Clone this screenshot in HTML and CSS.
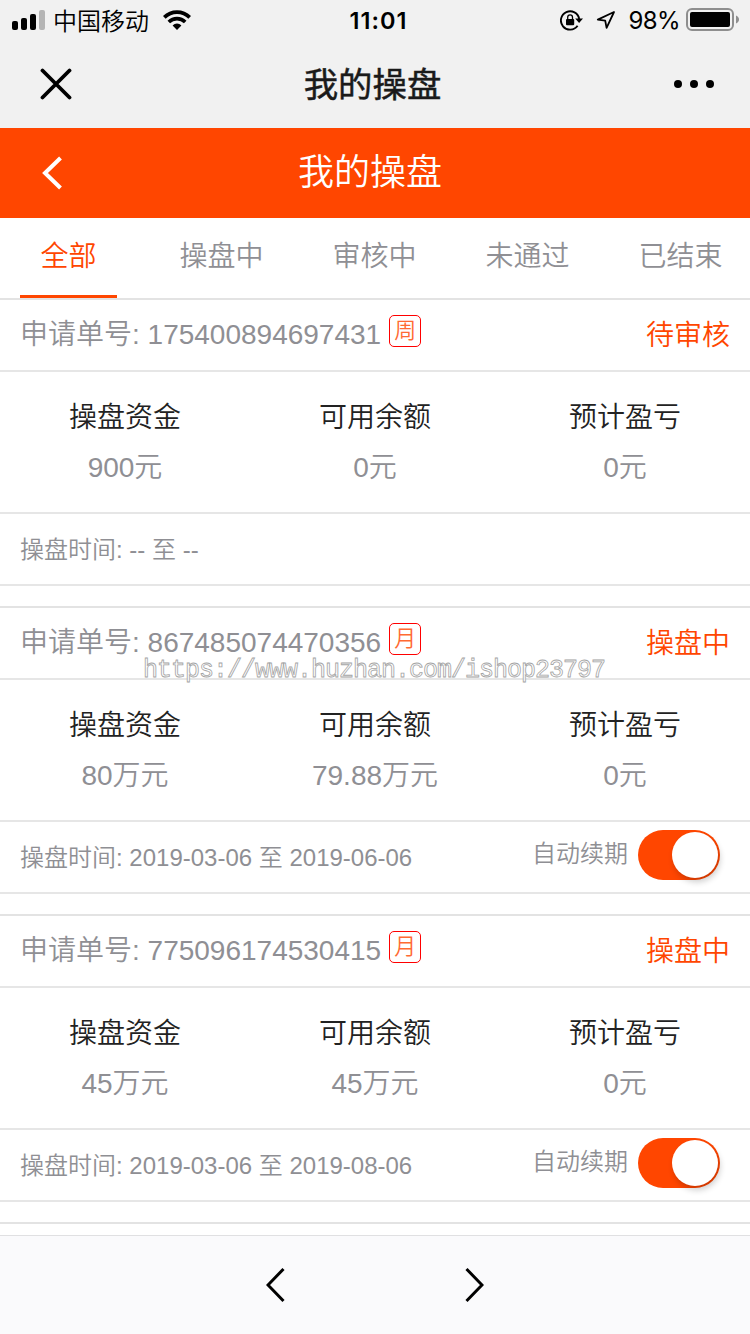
FILE: index.html
```html
<!DOCTYPE html>
<html lang="zh-CN">
<head>
    <meta charset="UTF-8">
    <meta name="viewport" content="width=device-width, initial-scale=1.0">
    <title>我的操盘</title>
    <link rel="stylesheet" href="styles.css">
</head>
<body>
    <div class="status-bar">
        <div class="status-left">
            <svg class="signal" width="34" height="20" viewBox="0 0 34 20">
                <rect x="0" y="11" width="6" height="9" rx="2"/>
                <rect x="9" y="8" width="6" height="12" rx="2"/>
                <rect x="18" y="4" width="6" height="16" rx="2"/>
                <rect x="27" y="0" width="6" height="20" rx="2" fill="#b4b4b4"/>
            </svg>
            <span class="carrier">中国移动</span>
            <svg class="wifi" width="28" height="20" viewBox="0 0 28 20">
                <path d="M1.3 7.3a18 18 0 0 1 25.4 0" fill="none" stroke="#000" stroke-width="3.8"/>
                <path d="M5.8 12a11.6 11.6 0 0 1 16.4 0" fill="none" stroke="#000" stroke-width="3.6"/>
                <path d="M14 20l-4.4-4.6a6.3 6.3 0 0 1 8.8 0z"/>
            </svg>
        </div>
        <span class="clock">11:01</span>
        <div class="status-right">
            <svg class="lock" width="23" height="21" viewBox="0 0 23 21">
                <path d="M17.6 15.8A9.2 9.2 0 1 1 19.2 9" fill="none" stroke="#000" stroke-width="1.9"/>
                <path d="M15.2 8.6H23L19.1 13z"/>
                <rect x="6" y="9" width="8.2" height="6.2" rx="1"/>
                <path d="M7.7 9.5V7.2a2.4 2.4 0 0 1 4.8 0v2.3" fill="none" stroke="#000" stroke-width="1.3"/>
            </svg>
            <svg class="arrow" width="20" height="20" viewBox="0 0 20 20">
                <path d="M18 2L1.8 9.6L9.2 10.6L10.6 17.8z" fill="none" stroke="#000" stroke-width="1.8" stroke-linejoin="round"/>
            </svg>
            <span class="percent">98%</span>
            <svg class="battery" width="54" height="24" viewBox="0 0 54 24">
                <rect x="1" y="1" width="46" height="21" rx="5" fill="none" stroke="#8e8e8e" stroke-width="2"/>
                <rect x="4" y="4" width="40" height="15" rx="2"/>
                <path d="M50 7.5c4 1.4 4 6.6 0 8z" fill="#8e8e8e"/>
            </svg>
        </div>
    </div>

    <div class="nav-bar">
        <svg width="32" height="32" viewBox="0 0 32 32">
            <path d="M2.5 2.5L29.5 29.5M29.5 2.5L2.5 29.5" fill="none" stroke="#000" stroke-width="3.8" stroke-linecap="round"/>
        </svg>
        <span class="nav-title">我的操盘</span>
        <svg width="42" height="10" viewBox="0 0 42 10">
            <circle cx="5" cy="5" r="4"/>
            <circle cx="21" cy="5" r="4"/>
            <circle cx="37" cy="5" r="4"/>
        </svg>
    </div>

    <header class="header">
        <svg class="back" width="20" height="34" viewBox="0 0 20 34">
            <path d="M18.5 2L3 17L18.5 32" fill="none" stroke="#fff" stroke-width="4"/>
        </svg>
        <h1>我的操盘</h1>
    </header>

    <nav class="tabs">
        <a class="tab active">全部</a>
        <a class="tab">操盘中</a>
        <a class="tab">审核中</a>
        <a class="tab">未通过</a>
        <a class="tab">已结束</a>
    </nav>

    <main class="list">
        <section class="card">
            <div class="card-head">
                <span class="order">申请单号: 175400894697431</span>
                <span class="badge">周</span>
                <span class="state">待审核</span>
            </div>
            <div class="card-body">
                <div class="item"><p class="label">操盘资金</p><p class="value">900元</p></div>
                <div class="item"><p class="label">可用余额</p><p class="value">0元</p></div>
                <div class="item"><p class="label">预计盈亏</p><p class="value">0元</p></div>
            </div>
            <div class="card-foot">
                <span class="date">操盘时间: -- 至 --</span>
            </div>
        </section>

        <section class="card">
            <div class="card-head">
                <span class="order">申请单号: 867485074470356</span>
                <span class="badge">月</span>
                <span class="state">操盘中</span>
                <span class="watermark">https://www.huzhan.com/ishop23797</span>
            </div>
            <div class="card-body">
                <div class="item"><p class="label">操盘资金</p><p class="value">80万元</p></div>
                <div class="item"><p class="label">可用余额</p><p class="value">79.88万元</p></div>
                <div class="item"><p class="label">预计盈亏</p><p class="value">0元</p></div>
            </div>
            <div class="card-foot">
                <span class="date">操盘时间: 2019-03-06 至 2019-06-06</span>
                <span class="renew">自动续期</span>
                <span class="switch"><i class="knob"></i></span>
            </div>
        </section>

        <section class="card">
            <div class="card-head">
                <span class="order">申请单号: 775096174530415</span>
                <span class="badge">月</span>
                <span class="state">操盘中</span>
            </div>
            <div class="card-body">
                <div class="item"><p class="label">操盘资金</p><p class="value">45万元</p></div>
                <div class="item"><p class="label">可用余额</p><p class="value">45万元</p></div>
                <div class="item"><p class="label">预计盈亏</p><p class="value">0元</p></div>
            </div>
            <div class="card-foot">
                <span class="date">操盘时间: 2019-03-06 至 2019-08-06</span>
                <span class="renew">自动续期</span>
                <span class="switch"><i class="knob"></i></span>
            </div>
        </section>

        <section class="card"></section>
    </main>

    <footer class="toolbar">
        <svg width="20" height="36" viewBox="0 0 20 36">
            <path d="M17.5 2L2 18L17.5 34" fill="none" stroke="#000" stroke-width="3"/>
        </svg>
        <svg width="20" height="36" viewBox="0 0 20 36">
            <path d="M2.5 2L18 18L2.5 34" fill="none" stroke="#000" stroke-width="3"/>
        </svg>
    </footer>
</body>
</html>
```

FILE: styles.css
```css
* {
    box-sizing: border-box;
    margin: 0;
    padding: 0;
}
body {
    display: flex;
    flex-direction: column;
    width: 750px;
    height: 1334px;
    overflow: hidden;
    background: #fff;
    font-family: "Liberation Sans", "Noto Sans CJK SC", sans-serif;
    font-size: 28px;
    font-weight: 350;
    color: #8f8f94;
}
svg {
    display: block;
    flex: none;
}

/* system status bar */
.status-bar {
    display: grid;
    grid-template-columns: 1fr auto 1fr;
    align-items: center;
    height: 40px;
    padding: 0 10px 0 12px;
    background: #f1f1f1;
    color: #000;
    font-family: Inter, "Noto Sans CJK SC", sans-serif;
    font-size: 24px;
    font-weight: 400;
    line-height: 30px;
}
.status-left, .status-right {
    display: flex;
    align-items: center;
    height: 40px;
}
.status-right {
    justify-content: flex-end;
}
.carrier {
    margin: 0 14px 0 7px;
    padding-top: 3px;
    font-weight: 350;
}
.clock {
    padding: 2px 0 0 5px;
    font-size: 23.5px;
    font-weight: 600;
    letter-spacing: 1px;
}
.arrow {
    margin: 0 13px 0 13px;
}
.percent {
    padding-top: 2px;
    margin-right: 6px;
    font-size: 24px;
    letter-spacing: -0.6px;
}

/* webview title bar */
.nav-bar {
    display: flex;
    align-items: center;
    justify-content: space-between;
    height: 88px;
    padding: 0 35px 0 40px;
    background: #f1f1f1;
}
.nav-title {
    margin-top: -4px;
    color: #1a1a1a;
    font-size: 34.4px;
    font-weight: 400;
    -webkit-text-stroke: 0.5px #1a1a1a;
}

.header {
    display: flex;
    align-items: center;
    height: 90px;
    padding: 0 42px;
    background: #ff4600;
}
.header h1 {
    flex: 1;
    margin-right: 30px;
    color: #fff;
    font-size: 36px;
    font-weight: 350;
    line-height: 86px;
    text-align: center;
}

.tabs {
    display: flex;
    gap: 56px;
    height: 80px;
    padding-left: 20px;
}
.tab {
    width: 97px;
    line-height: 78px;
    text-align: center;
    white-space: nowrap;
}
.tab.active {
    border-bottom: 3px solid #ff4600;
    color: #ff4600;
}

.list {
    flex: 1;
    overflow: hidden;
}
.card {
    margin-bottom: 20px;
    border-top: 2px solid #e3e3e3;
}
.card-head, .card-foot {
    position: relative;
    display: flex;
    align-items: center;
    height: 72px;
    padding: 0 20px;
    border-bottom: 2px solid #e6e6e6;
}
.order {
    margin-top: -6px;
}
.badge {
    width: 32px;
    height: 32px;
    margin: -8px 0 0 8px;
    border: 1px solid #ff0000;
    border-radius: 5px;
    color: #ff6a33;
    font-size: 22px;
    line-height: 30px;
    text-align: center;
}
.state {
    margin: -4px 0 0 auto;
    color: #ff4600;
}
.card-body {
    display: grid;
    grid-template-columns: repeat(3, 1fr);
    height: 142px;
    padding-top: 21px;
    border-bottom: 2px solid #e6e6e6;
    line-height: 50px;
    text-align: center;
}
.label {
    color: #222;
}
.card-foot {
    padding-right: 30px;
    font-size: 24px;
}
.date {
    margin-top: -4px;
}
.renew {
    margin: -11px 10px 0 auto;
}
.switch {
    display: flex;
    align-items: center;
    justify-content: flex-end;
    width: 82px;
    height: 50px;
    margin-top: -4px;
    padding-right: 2px;
    border-radius: 25px;
    background: #ff4600;
}
.knob {
    width: 46px;
    height: 46px;
    border-radius: 50%;
    background: #fff;
    box-shadow: 2px 4px 6px rgba(0, 0, 0, 0.2);
}
.watermark {
    position: absolute;
    top: 47px;
    left: 143px;
    color: #fff;
    font-family: "Liberation Mono", monospace;
    font-size: 25px;
    letter-spacing: -1px;
    line-height: 32px;
    -webkit-text-stroke: 0.8px #a4a4a4;
}

.toolbar {
    display: flex;
    align-items: center;
    justify-content: center;
    gap: 178px;
    height: 99px;
    border-top: 1px solid #e0e0e2;
    background: #fafafc;
}
```
